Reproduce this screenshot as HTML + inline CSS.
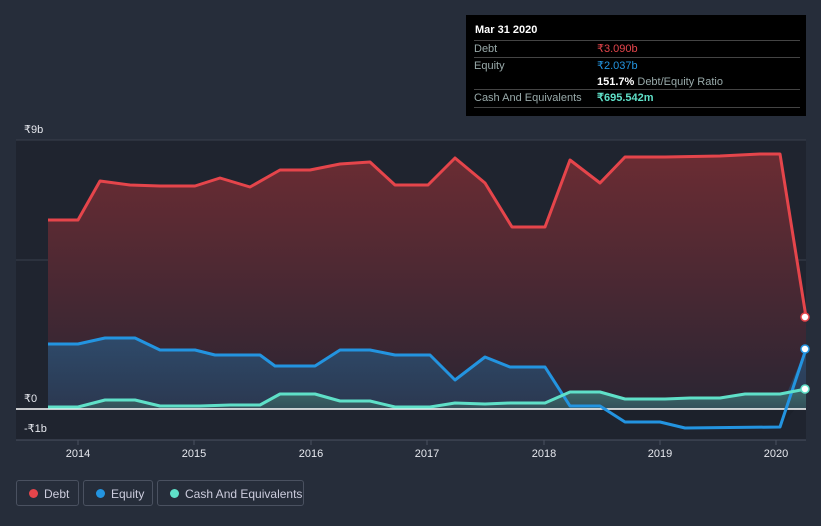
<!DOCTYPE html>
<html><head><style>
body{margin:0;width:821px;height:526px;background:#262d3a;font-family:"Liberation Sans","Noto Sans CJK SC",sans-serif;overflow:hidden;position:relative}
.tt{position:absolute;left:466px;top:15px;width:340px;height:101px;background:#000;color:#fff;font-size:11px}
.tt .h{position:absolute;left:9px;top:9px;font-weight:bold;font-size:11px}
.row{position:absolute;left:8px;width:326px;border-top:1px solid #444;height:17px;line-height:16px;color:#9aa}
.row span{position:absolute;left:123px}
.leg{position:absolute;top:480px;height:26px;border:1px solid #4a5160;border-radius:3px;color:#ccd;font-size:12px;line-height:26px;box-sizing:border-box}
.leg i{position:absolute;left:12px;top:8px;width:9px;height:9px;border-radius:50%}
.leg b{font-weight:normal;position:absolute;left:27px}
</style></head><body>
<svg width="821" height="526" style="position:absolute;left:0;top:0">
<defs>
<linearGradient id="gd" x1="0" y1="0" x2="0" y2="1"><stop offset="0" stop-color="#6b2c33"/><stop offset="1" stop-color="#2a2533"/></linearGradient>
<linearGradient id="ge" x1="0" y1="0" x2="0" y2="1"><stop offset="0" stop-color="#2e4a6a"/><stop offset="1" stop-color="#2b3850"/></linearGradient>
<linearGradient id="gc" x1="0" y1="0" x2="0" y2="1"><stop offset="0" stop-color="#3c6a6a"/><stop offset="1" stop-color="#33505a"/></linearGradient>
</defs>
<rect x="16" y="140" width="790" height="300" fill="#1f242f"/>
<line x1="16" y1="140" x2="806" y2="140" stroke="#3a404c"/>
<line x1="16" y1="260" x2="806" y2="260" stroke="#3a404c"/>
<polygon fill="url(#gd)" points="48,409 48,220 78,220 100,181 130,185 160,186 195,186 220,178 250,187 280,170 310,170 340,164 370,162 395,185 428,185 455,158 485,183 512,227 545,227 570,160 600,183 625,157 665,157 720,156 760,154 780,154 806,317 806,409"/>
<polygon fill="url(#ge)" points="48,409 48,344 78,344 105,338 135,338 160,350 195,350 215,355 260,355 275,366 315,366 340,350 370,350 395,355 430,355 455,380 485,357 510,367 545,367 570,406 600,406 625,409 780,409 806,349 806,409"/>
<polygon fill="url(#gc)" points="48,409 48,407 78,407 105,400 135,400 160,406 200,406 230,405 260,405 280,394 315,394 340,401 370,401 395,407 430,407 455,403 485,404 510,403 545,403 570,392 600,392 625,399 665,399 690,398 720,398 745,394 780,394 806,389 806,409"/>
<polygon fill="#1a1e28" opacity=".5" points="600,409 625,422 660,422 685,428 780,427 795,409"/>
<line x1="16" y1="409" x2="806" y2="409" stroke="#fff" stroke-width="1.5"/>
<line x1="16" y1="440" x2="806" y2="440" stroke="#4a5160"/>
<g stroke-width="3" fill="none" stroke-linejoin="round">
<polyline stroke="#e5454b" points="48,220 78,220 100,181 130,185 160,186 195,186 220,178 250,187 280,170 310,170 340,164 370,162 395,185 428,185 455,158 485,183 512,227 545,227 570,160 600,183 625,157 665,157 720,156 760,154 780,154 806,317"/>
<polyline stroke="#2394e0" points="48,344 78,344 105,338 135,338 160,350 195,350 215,355 260,355 275,366 315,366 340,350 370,350 395,355 430,355 455,380 485,357 510,367 545,367 570,406 600,406 625,422 660,422 685,428 780,427 806,349"/>
<polyline stroke="#5fe0c8" points="48,407 78,407 105,400 135,400 160,406 200,406 230,405 260,405 280,394 315,394 340,401 370,401 395,407 430,407 455,403 485,404 510,403 545,403 570,392 600,392 625,399 665,399 690,398 720,398 745,394 780,394 806,389"/>
</g>
<circle cx="805" cy="317" r="4" fill="#fff" stroke="#e5454b" stroke-width="1.5"/>
<circle cx="805" cy="349" r="4" fill="#fff" stroke="#2394e0" stroke-width="1.5"/>
<circle cx="805" cy="389" r="4" fill="#fff" stroke="#5fe0c8" stroke-width="1.5"/>
<g stroke="#4a5160"><line x1="78" y1="440" x2="78" y2="445"/><line x1="194" y1="440" x2="194" y2="445"/><line x1="311" y1="440" x2="311" y2="445"/><line x1="427" y1="440" x2="427" y2="445"/><line x1="544" y1="440" x2="544" y2="445"/><line x1="660" y1="440" x2="660" y2="445"/><line x1="776" y1="440" x2="776" y2="445"/></g>
<g fill="#e6e8ee" font-size="11" text-anchor="middle" font-family="Liberation Sans,sans-serif">
<text x="78" y="457">2014</text><text x="194" y="457">2015</text><text x="311" y="457">2016</text><text x="427" y="457">2017</text><text x="544" y="457">2018</text><text x="660" y="457">2019</text><text x="776" y="457">2020</text>
</g>
<g fill="#e6e8ee" font-size="11" font-family="Liberation Sans,sans-serif">
<text x="24" y="133">₹9b</text><text x="24" y="402">₹0</text><text x="24" y="432">-₹1b</text>
</g>
</svg>
<div class="tt"><div class="h">Mar 31 2020</div>
<div class="row" style="top:25px">Debt<span style="color:#e5454b">₹3.090b</span></div>
<div class="row" style="top:42px">Equity<span style="color:#2394e0">₹2.037b</span></div>
<div class="row" style="top:59px;border-top:none"><span style="color:#fff"><b>151.7%</b> <span style="position:static;color:#9aa">Debt/Equity Ratio</span></span></div>
<div class="row" style="top:74px;border-bottom:1px solid #444">Cash And Equivalents<span style="color:#5fe0c8;font-weight:bold">₹695.542m</span></div>
</div>
<div class="leg" style="left:16px;width:63px"><i style="background:#e5454b"></i><b>Debt</b></div>
<div class="leg" style="left:83px;width:70px"><i style="background:#2394e0"></i><b>Equity</b></div>
<div class="leg" style="left:157px;width:147px"><i style="background:#5fe0c8"></i><b>Cash And Equivalents</b></div>
</body></html>
